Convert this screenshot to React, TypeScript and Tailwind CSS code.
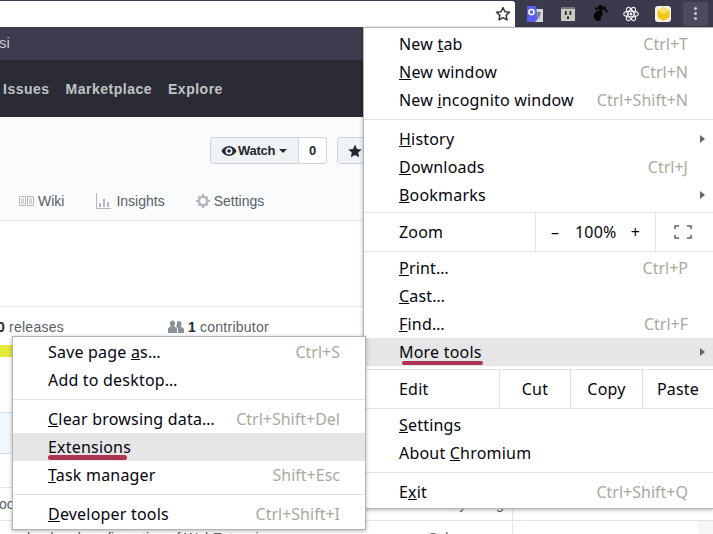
import type { ReactNode } from "react";

const menuFont = { fontFamily: '"Noto Sans", sans-serif' };

type Row = {
  label: ReactNode;
  keys?: string;
  arrow?: boolean;
  active?: boolean;
};

function MenuRow({ label, keys, arrow, active }: Row) {
  return (
    <div className={`relative flex h-7 items-center justify-between pl-[35px] pr-[25px] ${active ? "bg-[#e6e6e6]" : ""}`}>
      <span className="whitespace-nowrap tracking-[0.2px] text-[#050510]">{label}</span>
      {keys && <span className="whitespace-nowrap text-[#a9a99f]">{keys}</span>}
      {arrow && <span className="absolute right-2 top-[10px] h-0 w-0 border-y-4 border-l-[5px] border-y-transparent border-l-[#666]" />}
    </div>
  );
}

function Sep() {
  return <div className="my-[5px] h-px bg-[#e2e2e2]" />;
}

function Translate() {
  return (
    <svg width="18" height="18" viewBox="0 0 18 18">
      <path d="M8 4h9v13H8z" fill="#d5d8d8" />
      <path d="M11 7h4l-2 7z" fill="#777" />
      <path d="M1 1h9l2 13-3 3H1z" fill="#5b5fe8" />
      <circle cx="5.5" cy="7" r="2.6" fill="none" stroke="#fff" strokeWidth="1.5" />
    </svg>
  );
}

function Plug() {
  return (
    <svg width="16" height="16" viewBox="0 0 16 16">
      <path d="M1 2h14v13H1z" fill="#c9c9c4" />
      <path d="M1 1h14v2H1z" fill="#77767a" />
      <path d="M5 5h1.600v4H5zM9.600 5h1.600v4H9.600zM7 10.500h2V13H7z" fill="#222" />
    </svg>
  );
}

function Foot() {
  return (
    <svg width="16" height="17" viewBox="0 0 16 17">
      <path d="M6 6c3.500-1 5.500.6 4.600 3.500-.7 2-2.100 2.400-1.900 4.200.2 1.800-2.100 3.100-4.200 1.800C2 14 1 11.500 2 9.200 2.700 7.600 4.200 6.500 6 6z" fill="#050505" />
      <ellipse cx="8.500" cy="3" rx="2.500" ry="3" fill="#050505" />
      <ellipse cx="12.600" cy="3.500" rx="1.500" ry="2.200" fill="#050505" />
      <ellipse cx="14.600" cy="6" rx="1.200" ry="1.500" fill="#050505" />
      <ellipse cx="4.500" cy="3.800" rx="1.200" ry="1.900" fill="#050505" />
    </svg>
  );
}

function Atom() {
  return (
    <svg width="16" height="16" viewBox="0 0 16 16" fill="none" stroke="#f4f4f4" strokeWidth="1.100">
      <ellipse cx="8" cy="8" rx="7.300" ry="2.900" />
      <ellipse cx="8" cy="8" rx="7.300" ry="2.900" transform="rotate(60 8 8)" />
      <ellipse cx="8" cy="8" rx="7.300" ry="2.900" transform="rotate(120 8 8)" />
      <circle cx="8" cy="8" r="1.400" fill="#f4f4f4" stroke="none" />
    </svg>
  );
}

function Hex() {
  return (
    <div className="flex h-4 w-4 items-center justify-center rounded-[3px] bg-[#f4f2e6]">
      <svg width="13" height="14" viewBox="0 0 13 14">
        <path d="M6.500 0l6 3.500v7l-6 3.500-6-3.500v-7z" fill="#f3c613" />
        <path d="M6.500 0l6 3.500-6 3.500-6-3.500z" fill="#fbe26a" />
      </svg>
    </div>
  );
}

function Toolbar() {
  return (
    <div className="flex h-[27px] shrink-0 bg-[#3b3a4d]">
      <div className="mt-px flex w-[515px] items-center justify-end rounded-tr-[3px] bg-white pr-[4px]">
        <svg width="16" height="16" viewBox="0 0 24 24" fill="none" stroke="#333" strokeWidth="2.200" strokeLinejoin="round">
          <path d="M12 2.500l2.900 6.200 6.800.8-5 4.600 1.300 6.700-6-3.400-6 3.400 1.300-6.700-5-4.600 6.800-.8z" />
        </svg>
      </div>
      <div className="flex flex-1 items-center">
        <div className="ml-[11px]"><Translate /></div>
        <div className="ml-[16px]"><Plug /></div>
        <div className="ml-[16px]"><Foot /></div>
        <div className="ml-[15px]"><Atom /></div>
        <div className="ml-[16px]"><Hex /></div>
        <div className="ml-[12px] flex h-[24px] w-[25px] flex-col items-center justify-center gap-[2px] rounded-[2px] bg-[#4c4b5e]">
          <span className="h-[3px] w-[3px] rounded-full bg-[#c9c9cf]" />
          <span className="h-[3px] w-[3px] rounded-full bg-[#c9c9cf]" />
          <span className="h-[3px] w-[3px] rounded-full bg-[#c9c9cf]" />
        </div>
      </div>
    </div>
  );
}

function Page() {
  return (
    <div className="flex flex-col font-['Liberation_Sans',sans-serif]">
      <div className="flex h-[33px] items-center bg-[#3d3b4e] text-[15px] text-[#c8c8d0]">
        <span className="-ml-[1px]">si</span>
      </div>
      <div className="flex h-[57px] items-center gap-[16px] bg-[#2a2b34] pl-[3px] pt-[2px] text-[14px] font-bold tracking-[0.5px] text-[#c0c4c6]">
        <span>Issues</span>
        <span>Marketplace</span>
        <span>Explore</span>
      </div>
      <div className="h-[104px] border-b border-[#e1e4e8] bg-[#fafbfc]">
        <div className="flex pl-[210px] pt-[20px] text-[13px] font-bold tracking-[-0.25px] text-[#24292e]">
          <div className="flex h-[27px] w-[89px] items-center rounded-l-[3px] border border-[#d1d5da] bg-[#eff3f6] pl-[10px]">
            <svg width="16" height="16" viewBox="0 0 16 16" fill="#24292e">
              <path d="M8 3C4.500 3 1.800 5.300.5 8c1.300 2.700 4 5 7.500 5s6.200-2.300 7.500-5C14.200 5.300 11.500 3 8 3zm0 8.500A3.500 3.500 0 1 1 8 4.500a3.500 3.500 0 0 1 0 7zM8 6.200a1.800 1.800 0 1 0 0 3.600 1.800 1.800 0 0 0 0-3.600z" />
            </svg>
            <span className="ml-[1px]">Watch</span>
            <span className="ml-[4px] mt-[1px] h-0 w-0 border-x-[4px] border-t-[4px] border-x-transparent border-t-[#24292e]" />
          </div>
          <div className="-ml-px flex h-[27px] w-[29px] items-center justify-center rounded-r-[3px] border border-[#d1d5da] bg-white">0</div>
          <div className="ml-[10px] flex h-[27px] w-[60px] items-center rounded-l-[3px] border border-[#d1d5da] bg-[#eff3f6] pl-[10px]">
            <svg width="14" height="14" viewBox="0 0 14 14" fill="#24292e">
              <path d="M7 .5l2 4.400 4.700.5-3.500 3.200 1 4.700L7 10.900l-4.200 2.400 1-4.700L.3 5.400 5 4.900z" />
            </svg>
          </div>
        </div>
        <div className="flex pl-[19px] pt-[28px] text-[14px] leading-[18px] text-[#586069]">
          <div className="flex items-center gap-[4px]">
            <svg width="15" height="14" viewBox="0 0 15 14" fill="none" stroke="#b4b8bc">
              <path d="M.5 2.500h6v9h-6zM8.500 2.500h6v9h-6zM2 5h3M2 7h3M2 9h3M10 5h3M10 7h3M10 9h3" />
            </svg>
            <span>Wiki</span>
          </div>
          <div className="ml-[32px] flex items-center gap-[5px]">
            <svg width="15" height="16" viewBox="0 0 15 16" fill="#b4b8bc">
              <path d="M0 0h1v15h15v1H0zM3 10h2v4H3zM7 6h2v8H7zM11 9h2v5h-2z" />
            </svg>
            <span>Insights</span>
          </div>
          <div className="ml-[31px] flex items-center gap-[4px]">
            <svg width="14" height="14" viewBox="0 0 14 14">
              <circle cx="7" cy="7" r="4.200" fill="none" stroke="#b4b8bc" strokeWidth="2.600" />
              <path d="M6 0h2v2H6zM6 12h2v2H6zM0 6h2v2H0zM12 6h2v2h-2zM1.800 3.200L3.200 1.800l1.400 1.400-1.400 1.400zM9.400 10.800l1.400-1.400 1.400 1.400-1.400 1.400zM1.800 10.800l1.400-1.400 1.400 1.400-1.400 1.400zM9.400 3.200l1.400-1.400 1.400 1.400-1.400 1.400z" fill="#b4b8bc" />
            </svg>
            <span>Settings</span>
          </div>
        </div>
      </div>
      <div className="h-[86px] border-b border-[#e1e4e8] bg-white" />
      <div className="flex h-[38px] items-center pt-[2px] text-[14px] tracking-[0.25px] text-[#586069]">
        <span className="-ml-[3px] font-bold text-[#24292e]">0</span>
        <span className="ml-[4px]">releases</span>
        <svg className="ml-[104px]" width="16" height="14" viewBox="0 0 16 14" fill="#8a9198">
          <path d="M0 13V9c0-1.500 2.500-2 2.800-3C2 5 2 4 2 3c0-1.500 1-2.500 2.500-2.500S7 1.500 7 3c0 1-.1 2-.8 3 .3 1 2.800 1.500 2.800 3v4zM10 13V9.500C10 8 8.500 7 8 6.500c.8-1 1-2 1-3.500C9 2 9.300 1 11 1c1.500 0 2.500 1 2.500 2.500 0 1 0 2-.8 2.800.3.900 3.300 1.500 3.300 3V13z" />
        </svg>
        <span className="ml-[4px] font-bold text-[#24292e]">1</span>
        <span className="ml-[4px]">contributor</span>
      </div>
      <div className="h-[12px] w-[12px] bg-[#e4e93a]" />
      <div className="h-[55px]" />
      <div className="h-[42px] w-[12px] border-y border-[#c8e1ff] bg-[#f1f8ff]" />
      <div className="h-[34px] border-b border-[#e1e4e8]" />
      <div className="flex h-[33px] border-b border-[#e1e4e8]">
        <div className="flex w-[513px] border-r border-[#e1e4e8] text-[14px] text-[#586069]">
          <span className="-ml-[1px] mt-[6px]">oo</span>
          <span className="ml-[437px] mt-[6px] whitespace-nowrap">by using</span>
        </div>
      </div>
      <div className="flex h-[40px]">
        <div className="flex w-[513px] border-r border-[#e1e4e8] pl-[20px] pt-[7px] text-[14px] text-[#586069]">
          <span className="whitespace-nowrap">cloud and configuration of WebExtensions</span>
          <span className="ml-[147px]">Solo</span>
        </div>
        <div className="w-[185px]" />
        <div className="flex-1 bg-[#f6f6f6]" />
      </div>
    </div>
  );
}

function MainMenu() {
  return (
    <div style={menuFont} className="absolute left-[363px] top-[27px] w-[350px] border-b border-l border-t border-[#b4b4b4] bg-white pt-[2px] text-[16px] leading-7 shadow-[0_1px_4px_rgba(0,0,0,0.3)]">
      <MenuRow label={<>New <u>t</u>ab</>} keys="Ctrl+T" />
      <MenuRow label={<><u>N</u>ew window</>} keys="Ctrl+N" />
      <MenuRow label={<>New <u>i</u>ncognito window</>} keys="Ctrl+Shift+N" />
      <Sep />
      <MenuRow label={<><u>H</u>istory</>} arrow />
      <MenuRow label={<><u>D</u>ownloads</>} keys="Ctrl+J" />
      <MenuRow label={<><u>B</u>ookmarks</>} arrow />
      <div className="mt-[3px] flex h-[40px] items-center border-y border-[#e2e2e2] tracking-[0.2px]">
        <span className="w-[171px] pl-[35px] text-[#050510]">Zoom</span>
        <div className="flex h-full w-[121px] items-center border-x border-[#e2e2e2] text-[#050510]">
          <span className="w-[39px] text-center">–</span>
          <span className="ml-[1px] w-[41px] text-center">100%</span>
          <span className="w-[40px] text-center">+</span>
        </div>
        <svg className="ml-[18px]" width="18" height="14" viewBox="0 0 18 14" fill="none" stroke="#888" strokeWidth="2">
          <path d="M1 4V1h4M13 1h4v3M17 10v3h-4M5 13H1v-3" />
        </svg>
      </div>
      <div className="mt-[2px]" />
      <MenuRow label={<><u>P</u>rint…</>} keys="Ctrl+P" />
      <MenuRow label={<><u>C</u>ast…</>} />
      <MenuRow label={<><u>F</u>ind…</>} keys="Ctrl+F" />
      <div className="relative">
        <MenuRow label="More tools" arrow active />
        <span className="absolute left-[38px] top-[23px] h-[4px] w-[81px] rounded-full bg-[#ad3450]" />
      </div>
      <div className="mt-[3px] flex h-[40px] items-center border-y border-[#e2e2e2] text-center tracking-[0.2px] text-[#050510]">
        <span className="w-[135px] pl-[35px] text-left">Edit</span>
        <span className="h-full w-[71px] border-l border-[#e2e2e2] leading-[38px]">Cut</span>
        <span className="h-full w-[72px] border-l border-[#e2e2e2] leading-[38px]">Copy</span>
        <span className="h-full flex-1 border-l border-[#e2e2e2] leading-[38px]">Paste</span>
      </div>
      <div className="mt-[2px]" />
      <MenuRow label={<><u>S</u>ettings</>} />
      <MenuRow label={<>About <u>C</u>hromium</>} />
      <Sep />
      <MenuRow label={<>E<u>x</u>it</>} keys="Ctrl+Shift+Q" />
      <div className="h-[2px]" />
    </div>
  );
}

function SubMenu() {
  return (
    <div style={menuFont} className="absolute left-[12px] top-[336px] w-[354px] border border-[#b4b4b4] bg-white pt-[1px] text-[16px] leading-7 shadow-[0_1px_4px_rgba(0,0,0,0.3)]">
      <MenuRow label={<>Save page <u>a</u>s…</>} keys="Ctrl+S" />
      <MenuRow label="Add to desktop…" />
      <Sep />
      <MenuRow label={<><u>C</u>lear browsing data…</>} keys="Ctrl+Shift+Del" />
      <div className="relative">
        <MenuRow label="Extensions" active />
        <span className="absolute left-[35px] top-[22px] h-[5px] w-[79px] rounded-sm bg-[#ad3450]" />
      </div>
      <MenuRow label={<><u>T</u>ask manager</>} keys="Shift+Esc" />
      <Sep />
      <MenuRow label={<><u>D</u>eveloper tools</>} keys="Ctrl+Shift+I" />
      <div className="h-[1px]" />
    </div>
  );
}

export default function App() {
  return (
    <div className="relative flex h-[534px] w-[713px] flex-col overflow-hidden bg-white">
      <Toolbar />
      <Page />
      <MainMenu />
      <SubMenu />
    </div>
  );
}
